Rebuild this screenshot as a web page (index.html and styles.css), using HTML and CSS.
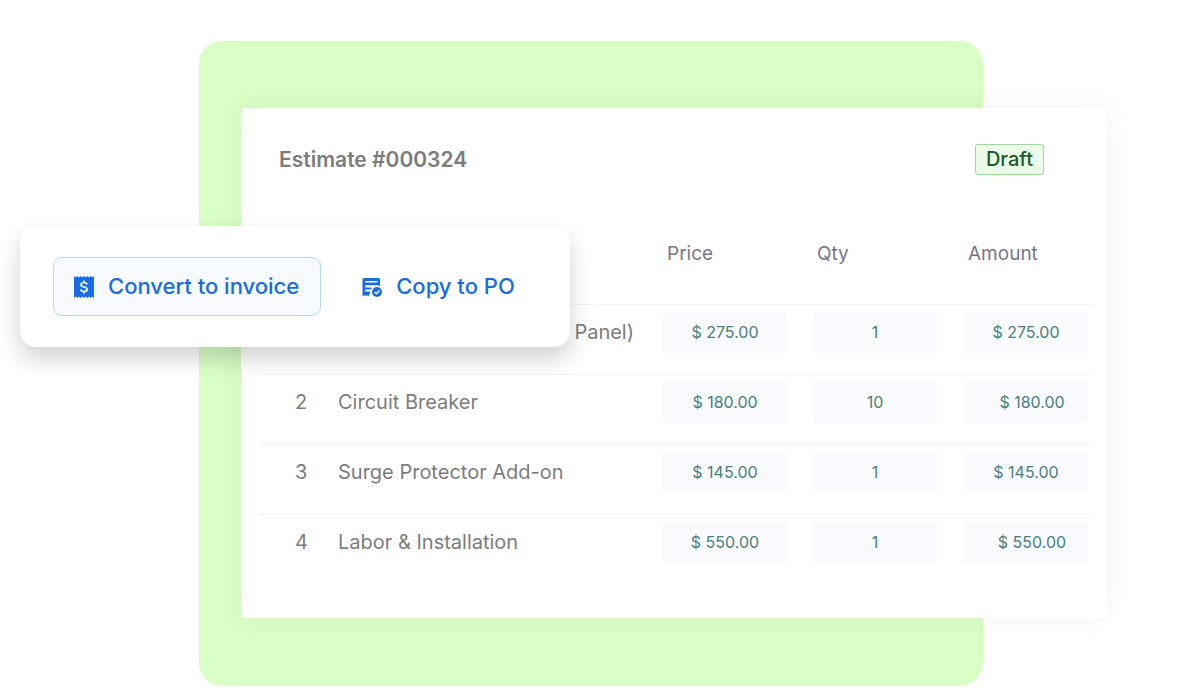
FILE: index.html
```html
<!DOCTYPE html>
<html lang="en">
<head>
<meta charset="utf-8">
<meta name="viewport" content="width=device-width, initial-scale=1">
<title>Estimate #000324</title>
<link rel="stylesheet" href="styles.css">
</head>
<body>
<main class="stage">
  <div class="backdrop"></div>
  <section class="card">
    <header class="card-head">
      <h1 class="title">Estimate #000324</h1>
      <span class="badge">Draft</span>
    </header>
    <table class="items">
      <colgroup><col class="col-num"><col><col class="col-price"><col class="col-qty"><col class="col-amount"></colgroup>
      <thead>
        <tr><th></th><th></th><th scope="col">Price</th><th scope="col">Qty</th><th scope="col">Amount</th></tr>
      </thead>
      <tbody>
        <tr>
          <td class="num">1</td><td class="name name-end">Panel)</td>
          <td><input class="field" aria-label="Price, item 1" value="$ 275.00"></td>
          <td><input class="field" aria-label="Qty, item 1" value="1"></td>
          <td><input class="field amount" aria-label="Amount, item 1" value="$ 275.00"></td>
        </tr>
        <tr>
          <td class="num">2</td><td class="name">Circuit Breaker</td>
          <td><input class="field" aria-label="Price, item 2" value="$ 180.00"></td>
          <td><input class="field" aria-label="Qty, item 2" value="10"></td>
          <td><input class="field amount" aria-label="Amount, item 2" value="$ 180.00"></td>
        </tr>
        <tr>
          <td class="num">3</td><td class="name">Surge Protector Add-on</td>
          <td><input class="field" aria-label="Price, item 3" value="$ 145.00"></td>
          <td><input class="field" aria-label="Qty, item 3" value="1"></td>
          <td><input class="field amount" aria-label="Amount, item 3" value="$ 145.00"></td>
        </tr>
        <tr>
          <td class="num">4</td><td class="name">Labor &amp; Installation</td>
          <td><input class="field" aria-label="Price, item 4" value="$ 550.00"></td>
          <td><input class="field" aria-label="Qty, item 4" value="1"></td>
          <td><input class="field amount" aria-label="Amount, item 4" value="$ 550.00"></td>
        </tr>
      </tbody>
    </table>
  </section>
  <div class="popup">
    <button class="action action-primary" type="button">
      <svg class="icon" viewBox="0 0 20 22" aria-hidden="true">
        <path fill="currentColor" d="M0 0 1.7 1.5 3.3 0 5 1.5 6.7 0 8.3 1.5 10 0l1.7 1.5L13.3 0 15 1.5 16.7 0l1.6 1.5L20 0v22l-1.7-1.5-1.6 1.5-1.7-1.5-1.7 1.5-1.6-1.5L10 22l-1.7-1.5L6.7 22 5 20.5 3.3 22l-1.6-1.5L0 22z"/>
        <path fill="none" stroke="#fff" stroke-width="1.7" d="M10 4.500v2M10 15.500v2M13 8.500C12.700 7.200 11.600 6.500 10 6.500c-1.800 0-3 .9-3 2.200 0 3.200 6.200 1.400 6.200 4.600 0 1.400-1.300 2.300-3.200 2.300-1.800 0-3-.8-3.300-2.200"/>
      </svg>
      <span class="action-label">Convert to invoice</span>
    </button>
    <button class="action" type="button">
      <svg class="icon" viewBox="0 0 20 22" aria-hidden="true">
        <path fill="currentColor" fill-rule="evenodd" d="M2 2H16.500Q18 2 18 3.500v6.500q-1.500-.7-3-.7H3.200v2.200h6.600l-1 2H3.200v2h5v2h-1v3.200L5.700 19l-1.500 1.500L2.700 19 .5 20.500V3.500Q.5 2 2 2zM3.200 5v1.600h12.300V5z"/>
        <circle cx="15" cy="16" r="5" fill="currentColor"/>
        <path fill="none" stroke="#fff" stroke-width="1.500" d="m12.600 16 1.700 1.700 3.200-3.200"/>
      </svg>
      <span class="action-label">Copy to PO</span>
    </button>
  </div>
</main>
</body>
</html>
```
FILE: styles.css
```css
* { box-sizing: border-box; }

body {
  margin: 0;
  background: #fff;
  font-family: Inter, "Liberation Sans", sans-serif;
  color: #7c7c7c;
}

.stage {
  position: relative;
  display: grid;
  grid-template-columns: 199fr 42fr 742fr 124fr 93fr;
  grid-template-rows: 41px 67px auto 68px;
}

.backdrop {
  grid-column: 2 / 4;
  grid-row: 2 / 5;
  border-radius: 23px;
  background: #daffc6;
}

.card {
  grid-column: 3 / 5;
  grid-row: 3;
  padding: 36px 13px 34px 19px;
  border-radius: 5px;
  background: #fff;
  box-shadow: 0 0 32px rgba(0, 0, 0, 0.06);
}

.card-head {
  display: flex;
  align-items: center;
  justify-content: space-between;
  margin-bottom: 27px;
  padding: 0 50px 0 19px;
}

.title {
  margin: 0;
  font-size: 21px;
  font-weight: 600;
  line-height: 31px;
}

.badge {
  padding: 0 10px;
  border: 1px solid #9ed69e;
  border-radius: 3px;
  background: #eafbe8;
  color: #22582a;
  font-size: 20px;
  font-weight: 500;
  line-height: 29px;
}

.items {
  width: 100%;
  table-layout: fixed;
  border-spacing: 0;
  font-size: 20px;
}

.col-num { width: 78px; }
.col-price { width: 150px; }
.col-qty { width: 151px; }
.col-amount { width: 130px; }

th {
  height: 102px;
  padding: 0 0 0 4px;
  color: #767689;
  font-size: 19px;
  font-weight: 400;
  text-align: left;
}

td {
  padding: 7px 0 21px;
  border-top: 1px solid #f4f4f4;
  line-height: 41px;
  vertical-align: top;
}

.num { padding-left: 35px; }

.name-end {
  padding-right: 29px;
  text-align: right;
}

.field {
  display: block;
  width: 124px;
  height: 41px;
  padding: 0 0 2px;
  border: 0;
  border-radius: 3px;
  background: #f8fafe;
  color: #48807f;
  font: 400 16px Inter, "Liberation Sans", sans-serif;
  text-align: center;
}

tr:nth-child(even) .amount { padding-left: 12px; }

.popup {
  position: absolute;
  top: 226px;
  left: 20px;
  display: flex;
  gap: 20px;
  padding: 31px 33px;
  border-radius: 16px;
  background: #fff;
  box-shadow: 0 12px 24px rgba(0, 0, 0, 0.18);
}

.action {
  display: flex;
  align-items: center;
  gap: 14px;
  height: 59px;
  padding: 0 21px 0 20px;
  border: 1px solid transparent;
  border-radius: 9px;
  background: transparent;
  color: #176ce6;
  font: 500 22px Inter, "Liberation Sans", sans-serif;
  white-space: nowrap;
}

.action-primary {
  border-color: #b5d8f5;
  background: #f7fbff;
}

.action-label { padding-bottom: 2px; }

.icon {
  width: 20px;
  height: 22px;
}
```
